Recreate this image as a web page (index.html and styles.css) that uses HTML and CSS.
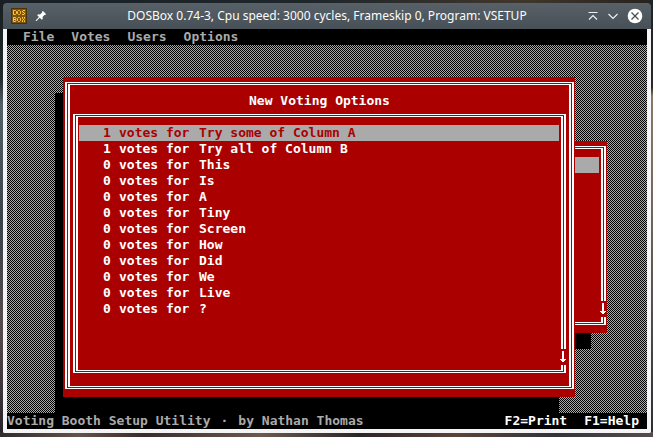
FILE: index.html
```html
<!DOCTYPE html>
<html lang="en">
<head>
<meta charset="utf-8">
<title>DOSBox 0.74-3, Cpu speed: 3000 cycles, Frameskip 0, Program: VSETUP</title>
<link rel="stylesheet" href="styles.css">
</head>
<body>
<div class="app">
  <header class="titlebar">
    <div class="tools">
      <svg class="logo" viewBox="0 0 16 16" aria-hidden="true">
        <rect width="16" height="16" fill="#4b3208"/>
        <rect x="1" y="1" width="14" height="14" fill="#7d5410"/>
        <g fill="none" stroke="#ffc83c">
          <path d="M2.500 2.500h2l1 1v2l-1 1h-2zM7.500 2.500h1l1 1v2l-1 1h-1l-1-1v-2zM14 2.500h-2l-.5.5v1l.5.5h1l.5.5v1l-.5.5h-2"/>
          <path d="M2.500 9.500h2l.5.5v1l-.5.5h-2h2l.5.5v1l-.5.5h-2zM7.500 9.500h1l1 1v2l-1 1h-1l-1-1v-2zM11.500 9v1.500l2 2V14M13.500 9v1.500l-2 2V14"/>
        </g>
      </svg>
      <button class="tool" aria-label="Keep above others">
        <svg viewBox="0 0 12 12" aria-hidden="true"><path fill="#fff" d="M7 1.500 8 1l3 3-.6 1-1-.1L7.500 7l.3 1.800-1 .9-2-1.900L1.500 11H.8v-.7L4 7 2.200 5.200l1-1L5 4.500 7.200 2.500z"/></svg>
      </button>
    </div>
    <h1 class="caption">DOSBox 0.74-3, Cpu speed: 3000 cycles, Frameskip 0, Program: VSETUP</h1>
    <div class="tools tools-end">
      <button class="tool" aria-label="Roll up">
        <svg viewBox="0 0 12 12" aria-hidden="true"><path fill="none" stroke="#eff0f1" stroke-width="1.200" d="M1.500 2.500h9M2 9.500l4-4 4 4"/></svg>
      </button>
      <button class="tool" aria-label="Minimize">
        <svg viewBox="0 0 12 12" aria-hidden="true"><path fill="none" stroke="#eff0f1" stroke-width="1.200" d="M1.500 4 6 8.500 10.500 4"/></svg>
      </button>
      <button class="tool tool-close" aria-label="Close">
        <svg viewBox="0 0 16 16" aria-hidden="true"><circle cx="8" cy="8" r="7.300" fill="#fff"/><path fill="none" stroke="#475057" stroke-width="1.300" d="m4.500 4.500 7 7m0-7-7 7"/></svg>
      </button>
    </div>
  </header>

  <main class="screen">
    <nav class="menu">
      <button>File</button>
      <button>Votes</button>
      <button>Users</button>
      <button>Options</button>
    </nav>

    <div class="workspace">
      <div class="window window-back">
        <div class="panel">
          <div class="frame frame-back">
            <div class="selection"></div>
            <svg class="arrow" viewBox="0 0 8 16" aria-hidden="true"><path d="M0 0h8v16H0z" fill="#a00"/><path d="M3 2h2v8h2v1H6v1H5v1H3v-1H2v-1H1v-1h2z" fill="#fff"/></svg>
          </div>
        </div>
      </div>

      <section class="window window-front" aria-labelledby="heading">
        <div class="panel">
          <div class="frame">
            <h2 class="heading" id="heading">New Voting Options</h2>
            <div class="frame list-frame">
              <ul class="list">
                <li><button class="row row-selected"><span>1</span><span>votes for</span><span>Try some of Column A</span></button></li>
                <li><button class="row"><span>1</span><span>votes for</span><span>Try all of Column B</span></button></li>
                <li><button class="row"><span>0</span><span>votes for</span><span>This</span></button></li>
                <li><button class="row"><span>0</span><span>votes for</span><span>Is</span></button></li>
                <li><button class="row"><span>0</span><span>votes for</span><span>A</span></button></li>
                <li><button class="row"><span>0</span><span>votes for</span><span>Tiny</span></button></li>
                <li><button class="row"><span>0</span><span>votes for</span><span>Screen</span></button></li>
                <li><button class="row"><span>0</span><span>votes for</span><span>How</span></button></li>
                <li><button class="row"><span>0</span><span>votes for</span><span>Did</span></button></li>
                <li><button class="row"><span>0</span><span>votes for</span><span>We</span></button></li>
                <li><button class="row"><span>0</span><span>votes for</span><span>Live</span></button></li>
                <li><button class="row"><span>0</span><span>votes for</span><span>?</span></button></li>
              </ul>
              <svg class="arrow" viewBox="0 0 8 16" aria-hidden="true"><path d="M0 0h8v16H0z" fill="#a00"/><path d="M3 2h2v8h2v1H6v1H5v1H3v-1H2v-1H1v-1h2z" fill="#fff"/></svg>
            </div>
          </div>
        </div>
      </section>
    </div>

    <footer class="status">
      <p class="about"><span>Voting Booth Setup Utility</span><span>·</span><span>by Nathan Thomas</span></p>
      <div class="keys">
        <button>F2=Print</button>
        <button>F1=Help</button>
      </div>
    </footer>
  </main>
</div>
</body>
</html>
```
FILE: styles.css
```css
* {
  box-sizing: border-box;
}

body {
  margin: 0;
  min-height: 100vh;
  display: flex;
  padding: 3px 2px 4px 3px;
  background:
    linear-gradient(90deg, #302b2e, #64534b 12%, #3a2c2b 22%, #6b5a50 40%, #2c2528 55%, #5c4338 70%, #32343c 85%, #574c4c) bottom / 100% 5px no-repeat,
    linear-gradient(#1c2327, #2b2826 20%, #8c7765 22%, #77685c 45%, #55504e 70%, #2c2c30) right / 3px 100% no-repeat,
    linear-gradient(#181e22, #20282c 18%, #55616a 24%, #39434a 50%, #564b4c 75%, #262229) left / 3px 100% no-repeat,
    linear-gradient(90deg, #182026, #20272b 50%, #40372c 80%, #262220);
}

button {
  margin: 0;
  padding: 0;
  border: 0;
  background: none;
  color: inherit;
  font: inherit;
  text-align: left;
  white-space: nowrap;
}

svg {
  display: block;
}

h1, h2, p, ul {
  margin: 0;
  padding: 0;
  font-size: inherit;
}

.app {
  flex: 1;
  display: flex;
  flex-direction: column;
}

.titlebar {
  display: grid;
  grid-template-columns: 1fr auto 1fr;
  align-items: center;
  height: 26px;
  padding: 0 8px;
  border-radius: 4px 4px 0 0;
  background: linear-gradient(#576167, #475057);
  color: #fcfcfc;
}

.caption {
  font: 12px/24px "Noto Sans", sans-serif;
  white-space: nowrap;
}

.tools {
  display: flex;
  align-items: center;
  gap: 8px;
}

.tools-end {
  justify-content: flex-end;
}

.logo {
  width: 16px;
  height: 16px;
}

.tool {
  width: 12px;
  height: 12px;
}

.tool-close {
  width: 16px;
  height: 16px;
}

.screen {
  flex: 1;
  display: flex;
  flex-direction: column;
  border: 4px solid #f4f4f6;
  border-top: 0;
  border-radius: 0 0 2px 2px;
  background: #000;
  color: #aaa;
  font: bold 13px/16px "DejaVu Sans Mono", monospace;
}

.menu {
  display: flex;
  gap: 17px;
  padding-left: 16px;
}

.workspace {
  position: relative;
  flex: 1;
  background: repeating-conic-gradient(#aaa 0 25%, #000 0 50%) 0 0 / 2px 2px;
}

.window {
  position: absolute;
  isolation: isolate;
  color: #fff;
}

.window::before {
  content: "";
  position: absolute;
  z-index: -1;
  inset: 16px 16px -16px -8px;
  background: #000;
}

.window-back {
  inset: 96px 40px 80px 88px;
}

.window-front {
  inset: 32px 72px 16px 56px;
}

.panel {
  display: flex;
  height: 100%;
  padding: 5px 1px 8px 2px;
  background: #a00;
}

.frame {
  position: relative;
  flex: 1;
  display: flex;
  flex-direction: column;
  border: double #fff;
  border-width: 3px 5px;
}

.frame-back {
  padding: 8px 2px;
}

.selection {
  height: 16px;
  background: #aaa;
}

.heading {
  padding: 8px 0 5px;
  text-align: center;
}

.list-frame {
  margin: 0 3px 13px;
  padding: 8px 2px 8px 1px;
}

.list {
  list-style: none;
}

.row {
  display: grid;
  grid-template-columns: 16px 80px 1fr;
  width: 100%;
  padding-left: 24px;
}

.row-selected {
  background: #aaa;
  color: #a00;
}

.arrow {
  position: absolute;
  right: -6px;
  bottom: 5px;
  width: 8px;
  height: 16px;
}

.status {
  display: flex;
  justify-content: space-between;
}

.about {
  display: flex;
  gap: 10px;
}

.keys {
  display: flex;
  gap: 17px;
  padding-right: 8px;
  color: #fff;
}
```
